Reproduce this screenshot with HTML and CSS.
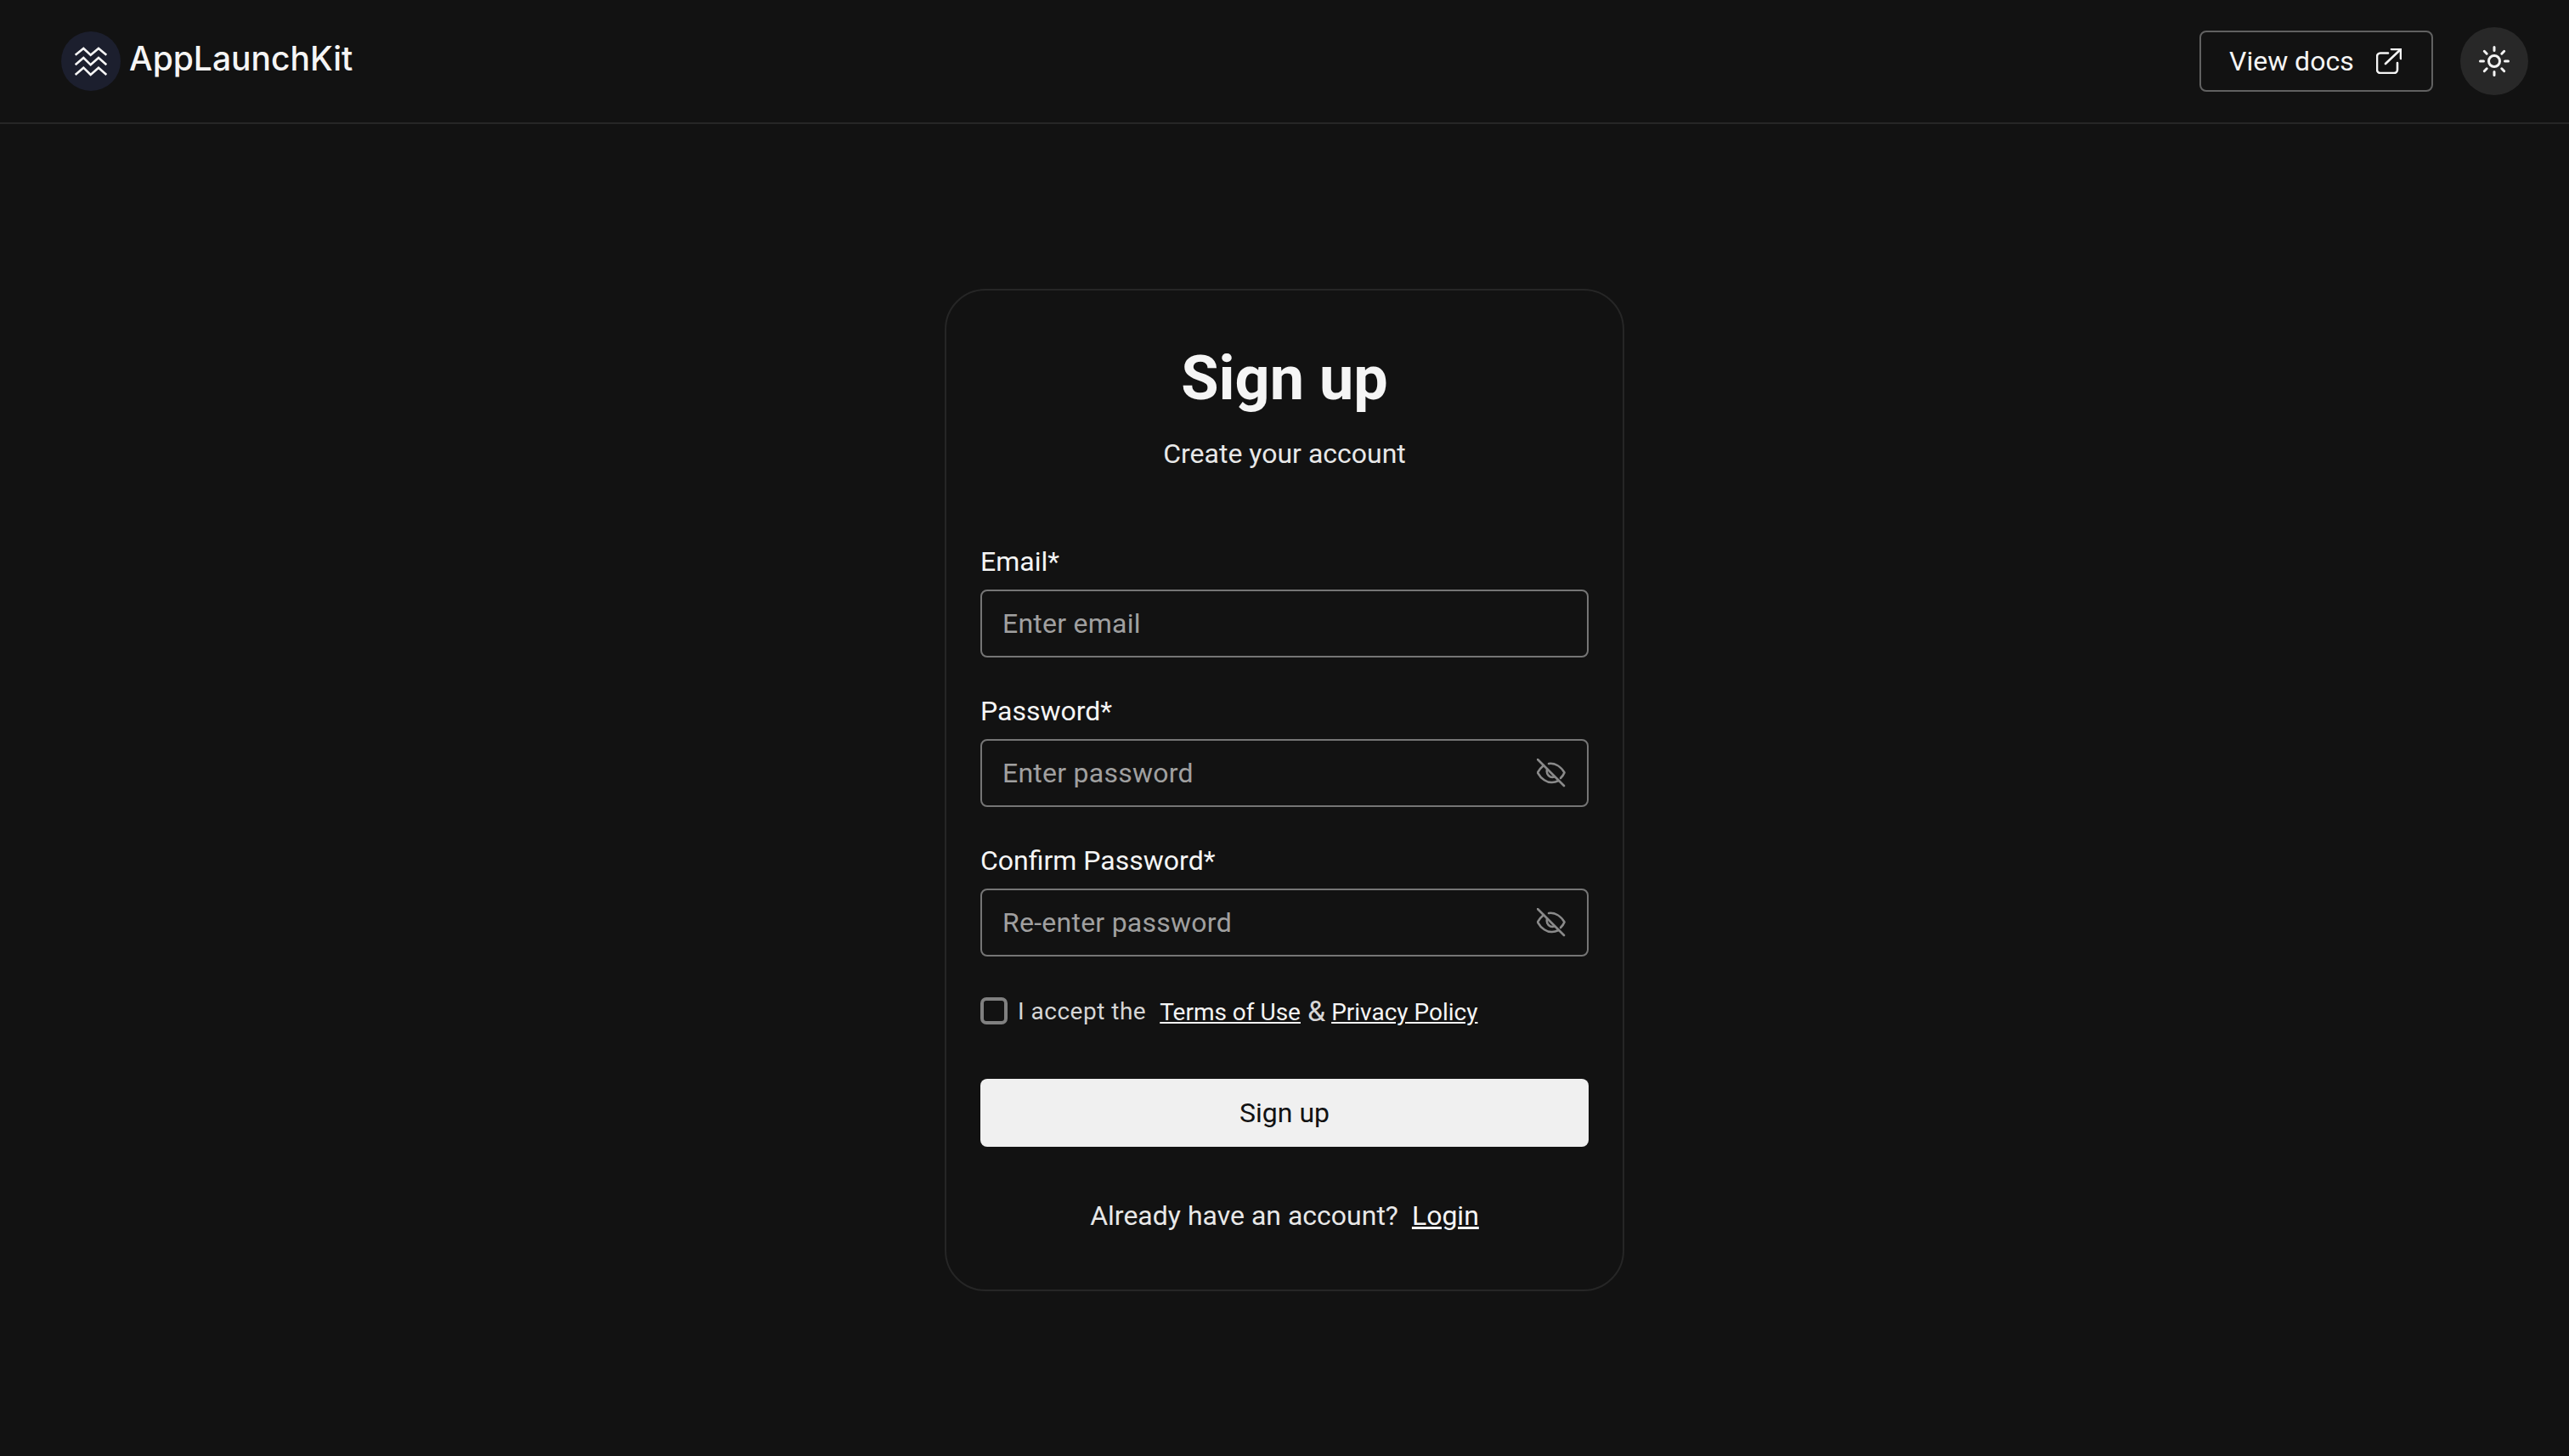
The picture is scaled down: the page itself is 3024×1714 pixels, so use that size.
FILE: index.html
```html
<!DOCTYPE html>
<html>
    <head>
        <title>AppLaunchKit - Sign up</title>
        <link rel="stylesheet" href="styles.css">
    </head>
    <body>
        <header class="topbar">
            <a class="brand" href="#">
                <svg class="brand-icon" viewBox="0 0 70 70">
                    <circle cx="35" cy="35" r="35" fill="#1c1f2e"></circle>
                    <path d="M16.7 27.7L26.3 20L34.7 27.7L44 20L53.3 27.7" fill="none" stroke="#f5f5f5" stroke-width="2.6"></path>
                    <path d="M16.7 39.3L26.3 31L34.7 39.3L44 31L53.3 39.3" fill="none" stroke="#f5f5f5" stroke-width="2.6"></path>
                    <path d="M16.7 51L26.3 42.7L34.7 51L44 42.7L53.3 51" fill="none" stroke="#f5f5f5" stroke-width="2.6"></path>
                </svg>
                <span class="brand-name">AppLaunchKit</span>
            </a>
            <div class="topbar-actions">
                <a class="docs-button" href="#">
                    View docs
                    <svg class="docs-icon" viewBox="0 0 30 30" fill="none" stroke="#f5f5f5" stroke-width="2.6" stroke-linecap="round" stroke-linejoin="round">
                        <path d="M14 5.5H5a4 4 0 0 0-4 4V25a4 4 0 0 0 4 4h16a4 4 0 0 0 4-4V17"></path>
                        <path d="M11 18L29 1"></path>
                        <path d="M18 1H29V12"></path>
                    </svg>
                </a>
                <button class="theme-button" type="button">
                    <svg class="theme-icon" viewBox="0 0 36 36" fill="none" stroke="#f5f5f5" stroke-width="3" stroke-linecap="round">
                        <circle cx="18" cy="18" r="6.5"></circle>
                        <path d="M18 1.5V5.5M18 30.5V34.5M1.5 18H5.5M30.5 18H34.5M6.3 6.3L9.2 9.2M26.8 26.8L29.7 29.7M6.3 29.7L9.2 26.8M26.8 9.2L29.7 6.3"></path>
                    </svg>
                </button>
            </div>
        </header>

        <main class="page">
            <form class="card">
                <h1 class="card-title">Sign up</h1>
                <p class="card-subtitle">Create your account</p>

                <div class="field">
                    <label class="field-label" for="email">Email*</label>
                    <div class="field-box">
                        <input class="field-input" id="email" type="text" placeholder="Enter email">
                    </div>
                </div>

                <div class="field">
                    <label class="field-label" for="password">Password*</label>
                    <div class="field-box">
                        <input class="field-input" id="password" type="password" placeholder="Enter password">
                        <svg class="eye-icon" viewBox="0 0 34 34" fill="none" stroke="#8a8a8a" stroke-width="2.6" stroke-linecap="round" stroke-linejoin="round">
                            <path d="M1 1L32 32"></path>
                            <path d="M14 6C21 5 28 9 32.500 16.500C31.500 19 30 21 28 23"></path>
                            <path d="M8 8C5 10.500 2.500 13.500 1 16.500C5 24 12 28.500 18 28C21 28 23.500 27 25.500 26"></path>
                            <path d="M12 12.500C11 16 12.500 20 16 21.500C17.500 22 19 22 20.500 21.500"></path>
                        </svg>
                    </div>
                </div>

                <div class="field">
                    <label class="field-label" for="confirm">Confirm Password*</label>
                    <div class="field-box">
                        <input class="field-input" id="confirm" type="password" placeholder="Re-enter password">
                        <svg class="eye-icon" viewBox="0 0 34 34" fill="none" stroke="#8a8a8a" stroke-width="2.6" stroke-linecap="round" stroke-linejoin="round">
                            <path d="M1 1L32 32"></path>
                            <path d="M14 6C21 5 28 9 32.500 16.500C31.500 19 30 21 28 23"></path>
                            <path d="M8 8C5 10.500 2.500 13.500 1 16.500C5 24 12 28.500 18 28C21 28 23.500 27 25.500 26"></path>
                            <path d="M12 12.500C11 16 12.500 20 16 21.500C17.500 22 19 22 20.500 21.500"></path>
                        </svg>
                    </div>
                </div>

                <div class="terms">
                    <input class="terms-check" id="terms" type="checkbox">
                    <label class="terms-label" for="terms">I accept the</label>
                    <a class="terms-link terms-first" href="#">Terms of Use</a>
                    <span class="terms-and">&amp;</span>
                    <a class="terms-link" href="#">Privacy Policy</a>
                </div>

                <button class="submit-button" type="button">Sign up</button>

                <p class="login-line">Already have an account? <a class="login-link" href="#">Login</a></p>
            </form>
        </main>
    </body>
</html>
```

FILE: styles.css
```css
html, body {
    margin: 0;
    height: 100%;
}

body {
    background-color: #121212;
    color: #f5f5f5;
    font-family: Roboto, "Liberation Sans", sans-serif;
    font-size: 32px;
}

a {
    color: inherit;
}

/* header */
.topbar {
    display: flex;
    align-items: center;
    justify-content: space-between;
    height: 144px;
    padding: 0 48px 0 72px;
    border-bottom: 2px solid #262626;
}

.brand {
    display: flex;
    align-items: center;
    gap: 10px;
    text-decoration: none;
}

.brand-icon {
    width: 70px;
    height: 70px;
}

.brand-name {
    font-family: Inter, sans-serif;
    font-size: 39px;
    font-weight: 500;
    position: relative;
    top: -4px;
}

.topbar-actions {
    display: flex;
    align-items: center;
    gap: 32px;
}

.docs-button {
    display: flex;
    align-items: center;
    justify-content: space-between;
    box-sizing: border-box;
    width: 275px;
    height: 72px;
    padding: 0 35px 0 33px;
    border: 2px solid #616161;
    border-radius: 8px;
    text-decoration: none;
}

.docs-icon {
    width: 30px;
    height: 30px;
}

.theme-button {
    display: flex;
    align-items: center;
    justify-content: center;
    width: 80px;
    height: 80px;
    padding: 0;
    border: none;
    border-radius: 50%;
    background-color: #282828;
}

.theme-icon {
    width: 36px;
    height: 36px;
}

/* card */
.page {
    display: flex;
    justify-content: center;
    padding-top: 194px;
}

.card {
    box-sizing: border-box;
    width: 800px;
    height: 1180px;
    padding: 48px 40px 0;
    border: 2px solid #262626;
    border-radius: 48px;
}

.card-title {
    margin: 0;
    font-size: 72px;
    line-height: 112px;
    font-weight: 700;
    text-align: center;
}

.card-subtitle {
    margin: 8px 0 79px;
    line-height: 48px;
    color: #e8e8e8;
    text-align: center;
}

.field {
    margin-bottom: 39px;
}

.field-label {
    display: block;
    margin-bottom: 9px;
    line-height: 48px;
}

.field-box {
    display: flex;
    align-items: center;
    box-sizing: border-box;
    height: 80px;
    padding: 0 25px 0 24px;
    border: 2px solid #757575;
    border-radius: 8px;
}

.field-input {
    flex: 1;
    min-width: 0;
    padding: 0;
    border: none;
    outline: none;
    background: transparent;
    color: #f5f5f5;
    font-family: inherit;
    font-size: 32px;
    letter-spacing: 0.25px;
}

.field-input::placeholder {
    color: #a0a0a0;
    opacity: 1;
}

.eye-icon {
    width: 34px;
    height: 34px;
}

/* terms */
.terms {
    display: flex;
    align-items: center;
    height: 32px;
    margin-top: 48px;
    color: #d6d6d6;
    font-size: 28px;
}

.terms-check {
    appearance: none;
    box-sizing: border-box;
    width: 32px;
    height: 32px;
    margin: 0 12px 0 0;
    border: 4px solid #808080;
    border-radius: 7px;
}

.terms-label {
    letter-spacing: 0.5px;
}

.terms-link {
    color: #f5f5f5;
    position: relative;
    top: 1px;
}

.terms-first {
    margin-left: 16px;
}

.terms-and {
    margin: 0 7px 0 8px;
    font-size: 34px;
}

.submit-button {
    display: block;
    width: 100%;
    height: 80px;
    margin-top: 64px;
    border: none;
    border-radius: 8px;
    background-color: #f0f0f0;
    color: #121212;
    font-family: inherit;
    font-size: 32px;
}

.login-line {
    margin: 57px 0 0;
    line-height: 48px;
    color: #e8e8e8;
    text-align: center;
}

.login-link {
    margin-left: 8px;
    color: #f5f5f5;
}
```
